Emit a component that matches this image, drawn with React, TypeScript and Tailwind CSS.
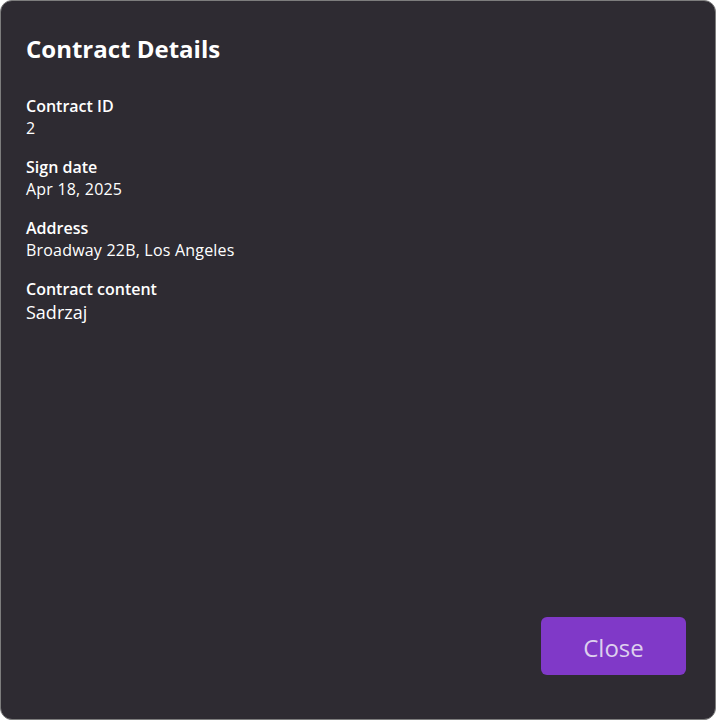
const fields = [
  { label: 'Contract ID', value: '2' },
  { label: 'Sign date', value: 'Apr 18, 2025' },
  { label: 'Address', value: 'Broadway 22B, Los Angeles' },
]

export default function App() {
  return (
    <div
      className="w-[716px] h-[720px] bg-white"
      style={{ fontFamily: '"Open Sans", "Noto Sans", sans-serif' }}
    >
      <div className="w-full h-full flex flex-col rounded-[12px] border border-[#7d7d7d] bg-[#2e2b32] text-white px-[25px] pt-[32px] pb-[44px]">
        <h2 className="text-[24px] leading-[32px] font-bold">Contract Details</h2>

        <div className="mt-[30px] flex flex-col gap-[17px]">
          {fields.map((f) => (
            <div key={f.label}>
              <div className="text-[16px] leading-[22px] font-semibold">{f.label}</div>
              <div className="text-[16px] leading-[22px] tracking-[0.2px]">{f.value}</div>
            </div>
          ))}
          <div>
            <div className="text-[16px] leading-[22px] font-semibold">Contract content</div>
            <div className="text-[18px] leading-[24px]">Sadrzaj</div>
          </div>
        </div>

        <div className="mt-auto flex justify-end pr-[4px]">
          <button className="w-[145px] h-[58px] pt-[4px] rounded-[6px] bg-[#8039c8] text-[#ddd0ee] text-[24px]">
            Close
          </button>
        </div>
      </div>
    </div>
  )
}
